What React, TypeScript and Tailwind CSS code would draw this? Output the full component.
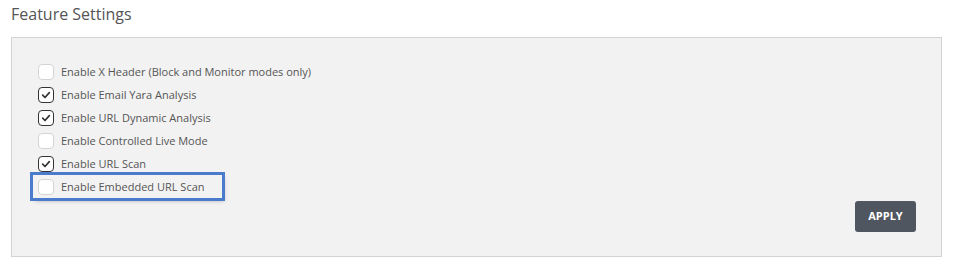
import React from 'react';

const features = [
	{ name: 'Enable X Header (Block and Monitor modes only)', checked: false },
	{ name: 'Enable Email Yara Analysis', checked: true },
	{ name: 'Enable URL Dynamic Analysis', checked: true },
	{ name: 'Enable Controlled Live Mode', checked: false },
	{ name: 'Enable URL Scan', checked: true },
	{ name: 'Enable Embedded URL Scan', checked: false, focused: true },
];

function Checkbox({ checked }: { checked: boolean }) {
	if (checked) {
		return (
			<span className="flex h-[16px] w-[16px] flex-none items-center justify-center rounded-[4px] border-[1.5px] border-[#333] bg-white">
				<svg viewBox="0 0 12 12" className="h-[10px] w-[10px]" aria-hidden="true">
					<path
						d="M2 6.2 L4.8 9 L10 3.2"
						fill="none"
						stroke="#333"
						strokeWidth="2"
						strokeLinecap="round"
						strokeLinejoin="round"
					/>
				</svg>
			</span>
		);
	}
	return (
		<span className="h-[16px] w-[16px] flex-none rounded-[4px] border border-[#d4d4d4] bg-white" />
	);
}

export default function App() {
	return (
		<div
			className="h-[271px] w-[960px] bg-white px-[11px] pt-[3px] text-[#555]"
			style={{ fontFamily: '"Open Sans", "Liberation Sans", sans-serif' }}
		>
			<h2 className="mb-[12px] h-[22px] text-[16px] leading-[22px] font-normal text-[#555]">
				Feature Settings
			</h2>
			<div className="w-[931px] border border-[#d3d3d3] bg-[#f2f2f2] pt-[22px] pb-[24px] pl-[21px] pr-[25px]">
				<ul className="flex flex-col">
					{features.map((f) => (
						<li
							key={f.name}
							className={
								f.focused
									? 'flex h-[23px] w-[189px] items-center gap-[7px] pl-[5px] outline-3 outline-solid outline-[#4b7bcb] shadow-[2px_3px_4px_rgba(0,0,0,0.25)]'
									: 'flex h-[23px] items-center gap-[7px] pl-[5px]'
							}
						>
							<Checkbox checked={f.checked} />
							<span className="text-[11px] leading-[16px] text-[#555]">{f.name}</span>
						</li>
					))}
				</ul>
				<div className="mt-[3px] flex justify-end">
					<button
						type="button"
						className="h-[31px] w-[61px] rounded-[3px] bg-[#4f5660] text-[11px] font-bold text-white"
					>
						APPLY
					</button>
				</div>
			</div>
		</div>
	);
}
